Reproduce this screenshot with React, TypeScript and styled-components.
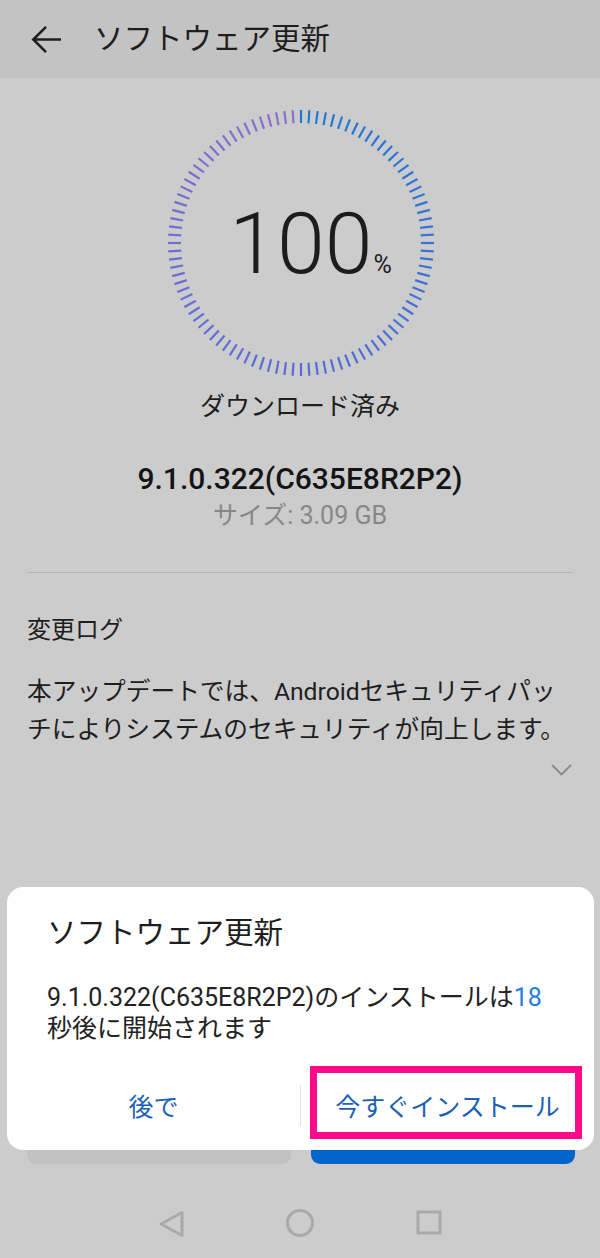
import React from "react";
import styled, { createGlobalStyle } from "styled-components";

const GlobalStyle = createGlobalStyle`
  body {
    margin: 0;
    background: #cccccc;
  }
`;

const TICKS = 100;
const RING = 268;

// colour stops along the ring, clockwise from 12 o'clock
const stops: [number, number, number][] = [
  [30, 121, 212],
  [86, 108, 216],
  [140, 111, 205],
];

function tickColor(t: number) {
  const seg = t < 0.5 ? 0 : 1;
  const k = t < 0.5 ? t * 2 : (t - 0.5) * 2;
  const a = stops[seg];
  const b = stops[seg + 1];
  const c = a.map((v, i) => Math.round(v + (b[i] - v) * k));
  return `rgb(${c[0]}, ${c[1]}, ${c[2]})`;
}

export default function App() {
  const c = RING / 2;
  const ticks = Array.from({ length: TICKS }, (_, i) => {
    const angle = (i / TICKS) * Math.PI * 2;
    const sin = Math.sin(angle);
    const cos = Math.cos(angle);
    return (
      <line
        key={i}
        x1={c + sin * 120}
        y1={c - cos * 120}
        x2={c + sin * 133}
        y2={c - cos * 133}
        stroke={tickColor(i / TICKS)}
        strokeWidth={2.2}
      />
    );
  });

  return (
    <Page>
      <GlobalStyle />
      <Header>
        <svg width="31" height="29" viewBox="0 0 31 29" fill="none">
          <path
            d="M30 14.5H2.5M15 1.8L2.3 14.5L15 27.2"
            stroke="#1f1f1f"
            strokeWidth="2.6"
          />
        </svg>
        <HeaderTitle>ソフトウェア更新</HeaderTitle>
      </Header>

      <Progress>
        <Ring>
          <svg width={RING} height={RING} viewBox={`0 0 ${RING} ${RING}`}>
            {ticks}
          </svg>
          <Percent>
            100<PercentSign>%</PercentSign>
          </Percent>
        </Ring>
        <Status>ダウンロード済み</Status>
        <Version>9.1.0.322(C635E8R2P2)</Version>
        <Size>サイズ: 3.09 GB</Size>
      </Progress>

      <Divider />

      <Changelog>
        <ChangelogTitle>変更ログ</ChangelogTitle>
        <ChangelogText>
          本アップデートでは、Androidセキュリティパッ
          <br />
          チによりシステムのセキュリティが向上します。
        </ChangelogText>
        <Expand>
          <svg width="21" height="12" viewBox="0 0 21 12" fill="none">
            <path d="M1 1L10.5 10.5L20 1" stroke="#8a8a8a" strokeWidth="1.8" />
          </svg>
        </Expand>
      </Changelog>

      <Actions>
        <ActionButton />
        <ActionButton primary />
      </Actions>

      <NavBar>
        <svg width="30" height="30" viewBox="0 0 30 30" fill="none">
          <path
            d="M26 4.5L5 16L26 27.5Z"
            stroke="#a9a9a9"
            strokeWidth="3"
            strokeLinejoin="round"
          />
        </svg>
        <svg width="30" height="30" viewBox="0 0 30 30" fill="none">
          <circle cx="15" cy="15" r="12.5" stroke="#a9a9a9" strokeWidth="3" />
        </svg>
        <svg width="30" height="30" viewBox="0 0 30 30" fill="none">
          <rect x="4" y="4" width="22" height="21" stroke="#a9a9a9" strokeWidth="3" />
        </svg>
      </NavBar>

      <Dialog>
        <DialogTitle>ソフトウェア更新</DialogTitle>
        <DialogBody>
          9.1.0.322(C635E8R2P2)のインストールは<Countdown>18</Countdown>
          <br />
          秒後に開始されます
        </DialogBody>
        <DialogButtons>
          <DialogButton>後で</DialogButton>
          <ButtonSeparator />
          <DialogButton>
            今すぐインストール
            <Highlight />
          </DialogButton>
        </DialogButtons>
      </Dialog>
    </Page>
  );
}

const Page = styled.div`
  position: relative;
  width: 600px;
  height: 1258px;
  overflow: hidden;
  display: flex;
  flex-direction: column;
  background: #cccccc;
  color: #1e1e1e;
  font-family: Roboto, "Noto Sans CJK JP", sans-serif;
`;

const Header = styled.div`
  height: 78px;
  flex-shrink: 0;
  display: flex;
  align-items: center;
  gap: 32px;
  padding-left: 31px;
  background: #c3c3c3;
`;

const HeaderTitle = styled.div`
  font-size: 29.5px;
  line-height: 40px;
  color: #1e1e1e;
`;

const Progress = styled.div`
  margin-top: 31px;
  display: flex;
  flex-direction: column;
  align-items: center;
`;

const Ring = styled.div`
  display: grid;
  place-items: center;
  width: 268px;
  height: 268px;
  margin-left: 2px;

  & > * {
    grid-area: 1 / 1;
  }
`;

const Percent = styled.div`
  padding-top: 2px;
  font-size: 86px;
  font-weight: 300;
  line-height: 1;
  color: #1c1c1c;
`;

const PercentSign = styled.span`
  margin-left: 1px;
  margin-right: -19px;
  font-size: 25px;
  font-weight: 400;
`;

const Status = styled.div`
  margin-top: 13px;
  font-size: 25px;
  line-height: 34px;
`;

const Version = styled.div`
  margin-top: 37px;
  font-size: 30px;
  font-weight: 500;
  line-height: 36px;
  color: #141414;
`;

const Size = styled.div`
  margin-top: 4px;
  font-size: 25px;
  line-height: 30px;
  color: #878787;
`;

const Divider = styled.div`
  height: 1px;
  margin: 41px 27px 0;
  background: #b6b6b6;
`;

const Changelog = styled.div`
  padding: 0 27px;
  display: flex;
  flex-direction: column;
`;

const ChangelogTitle = styled.div`
  margin-top: 40px;
  font-size: 24px;
  line-height: 34px;
`;

const ChangelogText = styled.div`
  margin-top: 26px;
  font-size: 24.7px;
  line-height: 38px;
  white-space: nowrap;
`;

const Expand = styled.div`
  margin-top: 15px;
  align-self: flex-end;
  padding-right: 1px;
  line-height: 0;
`;

const Actions = styled.div`
  margin-top: auto;
  margin-bottom: 24px;
  padding: 0 25px 0 27px;
  display: grid;
  grid-template-columns: 1fr 1fr;
  gap: 20px;
`;

const ActionButton = styled.div<{ primary?: boolean }>`
  height: 48px;
  border-radius: 9px;
  background: ${(p) => (p.primary ? "#0066cc" : "#c2c2c2")};
`;

const NavBar = styled.div`
  height: 70px;
  flex-shrink: 0;
  display: flex;
  align-items: center;
  justify-content: center;
  gap: 99px;
`;

const Dialog = styled.div`
  position: absolute;
  left: 7px;
  top: 887px;
  width: 587px;
  box-sizing: border-box;
  padding: 26px 0 13px;
  border-radius: 16px;
  background: #ffffff;
`;

const DialogTitle = styled.div`
  padding: 0 40px;
  font-size: 29.5px;
  line-height: 40px;
  color: #1e1e1e;
`;

const DialogBody = styled.div`
  margin-top: 29px;
  padding: 0 40px;
  font-size: 25px;
  line-height: 31px;
  color: #222222;
  white-space: nowrap;
`;

const Countdown = styled.span`
  color: #1e80e2;
`;

const DialogButtons = styled.div`
  margin-top: 29px;
  height: 64px;
  display: grid;
  grid-template-columns: 1fr auto 1fr;
  align-items: center;
`;

const DialogButton = styled.div`
  position: relative;
  height: 100%;
  display: flex;
  align-items: center;
  justify-content: center;
  font-size: 25px;
  color: #1b5fb6;
`;

const ButtonSeparator = styled.div`
  width: 1px;
  height: 41px;
  background: #e2e2e2;
`;

const Highlight = styled.div`
  position: absolute;
  left: 9px;
  top: -7px;
  width: 272px;
  height: 73px;
  box-sizing: border-box;
  border: 7px solid #ff0a8a;
`;
